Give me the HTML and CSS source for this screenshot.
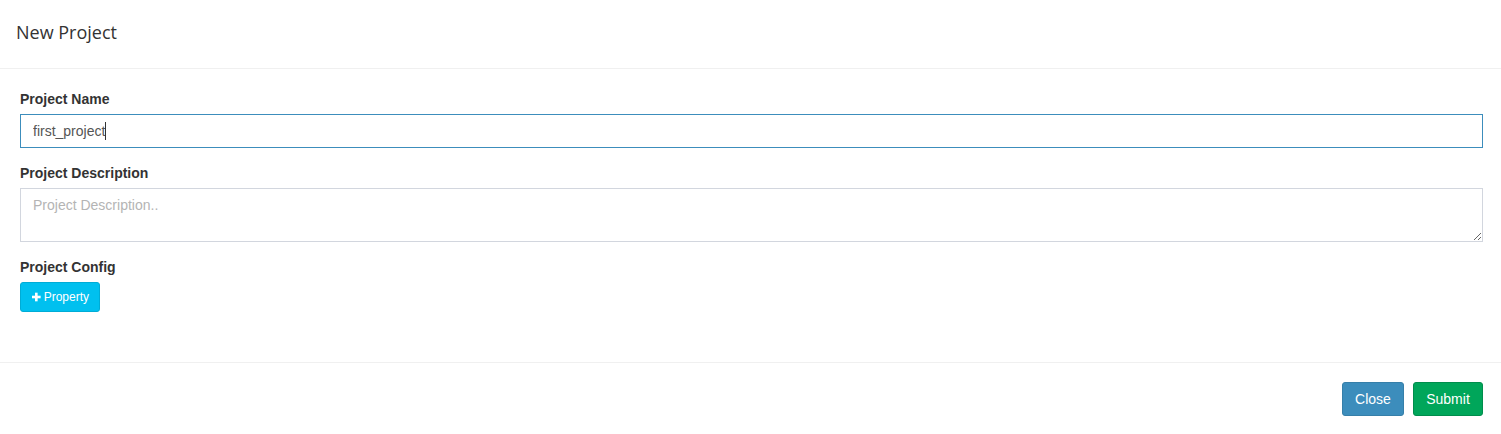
FILE: index.html
```html
<!DOCTYPE html>
<html>
<head>
<meta charset="utf-8">
<link rel="stylesheet" href="styles.css">
</head>
<body>
<div class="modal">
  <div class="modal-header">
    <h4 class="modal-title">New Project</h4>
  </div>
  <div class="modal-body">
    <div class="form-group">
      <label class="label">Project Name</label>
      <div class="input-wrap">
        <input class="form-control focus" type="text" value="first_project">
        <span class="caret"></span>
      </div>
    </div>
    <div class="form-group">
      <label class="label">Project Description</label>
      <textarea class="form-control area" rows="2" placeholder="Project Description.."></textarea>
    </div>
    <div class="form-group">
      <label class="label">Project Config</label>
      <div class="btn-row">
        <button class="btn btn-info btn-sm"><svg class="plus" width="10" height="10" viewBox="0 0 10 10"><rect x="3.5" y="0" width="3" height="10" fill="#fff"/><rect x="0" y="3.5" width="10" height="3" fill="#fff"/></svg><span>Property</span></button>
      </div>
    </div>
  </div>
  <div class="modal-footer">
    <button class="btn btn-primary">Close</button>
    <button class="btn btn-success">Submit</button>
  </div>
</div>
</body>
</html>
```

FILE: styles.css
```css
* { box-sizing: border-box; }
html, body { margin: 0; padding: 0; background: #fff; }
body {
  font-family: "Liberation Sans", Arial, sans-serif;
  font-size: 14px;
  line-height: 20px;
  color: #333;
}
.modal { width: 1501px; }
.modal-header {
  height: 69px;
  padding: 20px 16px 0 16px;
  border-bottom: 1px solid #f0f0f0;
}
.modal-title {
  margin: 0;
  font-family: "Open Sans", "Noto Sans", sans-serif;
  font-weight: 400;
  font-size: 18px;
  line-height: 25px;
  color: #333;
}
.modal-body {
  padding: 20px 18px 35px 20px;
}
.form-group { margin-bottom: 15px; }
.label {
  display: block;
  font-weight: bold;
  font-size: 14px;
  line-height: 20px;
  margin-bottom: 5px;
  color: #333;
}
.input-wrap { position: relative; }
.form-control {
  display: block;
  width: 100%;
  height: 34px;
  padding: 6px 12px;
  font-family: "Liberation Sans", Arial, sans-serif;
  font-size: 14px;
  line-height: 20px;
  color: #555;
  background: #fff;
  border: 1px solid #d2d6de;
  border-radius: 0;
  outline: none;
  margin: 0;
}
.form-control.focus { border-color: #3c8dbc; }
.caret {
  position: absolute;
  left: 85px;
  top: 8px;
  width: 1px;
  height: 18px;
  background: #333;
}
.area {
  height: 54px;
  resize: vertical;
}
.area::placeholder { color: #b4b4b4; }
.btn-row { display: flex; }
.btn {
  display: inline-flex;
  align-items: center;
  justify-content: center;
  white-space: nowrap;
  font-family: "Liberation Sans", Arial, sans-serif;
  font-size: 14px;
  line-height: 20px;
  padding: 0 12px;
  border: 1px solid transparent;
  border-radius: 3px;
  color: #fff;
  cursor: pointer;
  margin: 0;
}
.btn-sm {
  font-size: 12px;
  line-height: 18px;
  padding: 0 10px 0 11px;
  height: 30px;
  width: 80px;
  gap: 3px;
  justify-content: flex-start;
}
.plus { display: block; }
.btn-info { background: #00c0ef; border-color: #00acd6; }
.btn-primary { background: #3c8dbc; border-color: #367fa9; width: 62px; height: 34px; }
.btn-success { background: #00a65a; border-color: #008d4c; width: 70px; height: 34px; }
.modal-footer {
  border-top: 1px solid #f0f0f0;
  padding: 19px 18px 19px 15px;
  display: flex;
  justify-content: flex-end;
  gap: 9px;
}
```
